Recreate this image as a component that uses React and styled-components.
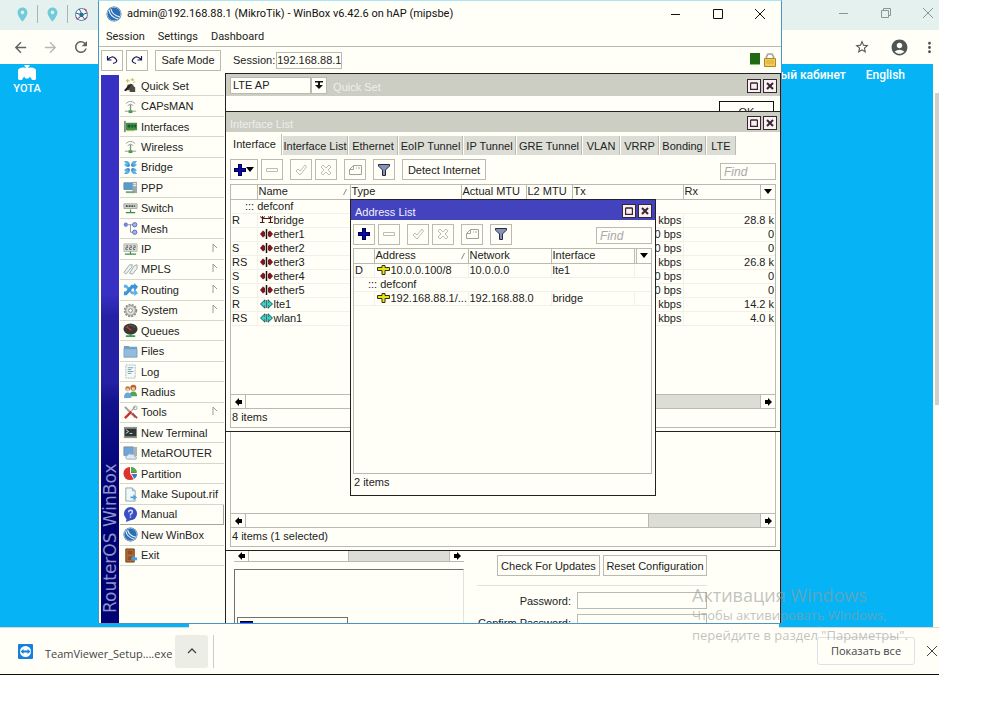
import styled, { createGlobalStyle, css } from 'styled-components'
import { MdArrowBack, MdArrowForward, MdRefresh, MdStarBorder, MdAccountCircle, MdMoreVert, MdPlace } from 'react-icons/md'

const colors = {
	paper: '#fffff8',
	line: '#b9bab2',
	soft: '#e2e3dc',
	bar: '#cccec4',
	track: '#dcded6',
	sky: '#06b4f6',
	ink: '#222222'
}

const fonts = {
	ui: '"Liberation Sans", Arial, sans-serif',
	system: '"Open Sans", "Noto Sans", sans-serif',
	web: 'Roboto, "Noto Sans", sans-serif'
}

const GlobalStyle = createGlobalStyle`
	* {
		box-sizing: border-box;
	}
	body {
		margin: 0;
		background: #ffffff;
		color: ${colors.ink};
		font: 11px/14px ${fonts.ui};
	}
	button, input, select {
		margin: 0;
		padding: 0;
		border-radius: 0;
		font: inherit;
		color: inherit;
		appearance: none;
	}
	svg {
		display: block;
		flex: none;
	}
`

/* browser */

const Browser = styled.div`
	position: relative;
	margin-right: 61px;
	display: flex;
	flex-direction: column;
	background: ${colors.paper};
	border-bottom: 1px solid #111111;
	overflow: hidden;
`

const TabStrip = styled.div`
	display: flex;
	align-items: center;
	justify-content: space-between;
	height: 30px;
	padding: 0 5px 4px 14px;
	background: #e4f1ef;
`

const PinnedTabs = styled.div`
	display: flex;
	align-items: center;
	color: #72cbd8;
	gap: 6px;
	padding-top: 2px;
`

const TabDivider = styled.span`
	width: 1px;
	height: 18px;
	background: #a9b3b1;
`

const Caption = styled.div`
	display: flex;
	align-items: center;
	gap: ${p => p.$gap}px;
	color: ${p => p.$color};
`

const Ghost = styled.button`
	display: flex;
	align-items: center;
	justify-content: center;
	border: 0;
	background: none;
	color: inherit;
`

const AddressBar = styled.div`
	display: flex;
	align-items: center;
	justify-content: space-between;
	height: 34px;
	padding: 0 1px 0 12px;
	color: #5c6463;
`

const NavButtons = styled.div`
	display: flex;
	gap: 13px;
`

const Page = styled.main`
	display: flex;
	justify-content: space-between;
	height: 564px;
	background: ${colors.sky};
	border-bottom: 1px solid #d8d8d4;
	color: #ffffff;
	font-family: ${fonts.web};
`

const Yota = styled.a`
	display: flex;
	flex-direction: column;
	align-items: center;
	width: 54px;
	height: 34px;
	padding-top: 1px;
	color: #ffffff;
	font: 500 11px/14px ${fonts.web};
	text-decoration: none;
`

const PageLinks = styled.nav`
	display: flex;
	gap: 20px;
	padding: 4px 28px 0 0;
	margin-left: auto;
	a {
		color: #ffffff;
		font-size: 12px;
		font-weight: 500;
		text-decoration: none;
	}
`

const PageScroll = styled.div`
	width: 6px;
	padding: 29px 0 0 2px;
	background: ${colors.paper};
`

const PageThumb = styled.div`
	height: 312px;
	background: #cfcfcb;
`

const PageCard = styled.div`
	position: absolute;
	top: 623px;
	left: 189px;
	right: 160px;
	height: 5px;
	background: ${colors.paper};
`

const Downloads = styled.footer`
	display: flex;
	align-items: center;
	height: 46px;
	padding: 0 1px 0 18px;
	font: 11px/16px ${fonts.system};
	color: #444444;
`

const FileName = styled.span`
	width: 128px;
	margin-left: 12px;
	padding-top: 5px;
	white-space: nowrap;
`

const Chevron = styled(Ghost)`
	width: 33px;
	height: 33px;
	border-radius: 3px;
	background: #eceee6;
	margin-left: 2px;
`

const DownloadDivider = styled.span`
	width: 1px;
	height: 33px;
	margin-left: 5px;
	background: #cccccc;
`

const ShowAll = styled.button`
	width: 98px;
	height: 28px;
	margin-left: auto;
	margin-right: 11px;
	border: 1px solid #dfe0e8;
	border-radius: 3px;
	background: ${colors.paper};
	font: 500 11px/14px ${fonts.system};
`

const Watermark = styled.div`
	position: absolute;
	z-index: 5;
	top: 585px;
	right: 26px;
	width: 221px;
	color: rgba(150, 155, 150, 0.6);
	font: 13px/20px ${fonts.system};
	white-space: nowrap;
	pointer-events: none;
	p {
		margin: 0;
	}
	p:first-child {
		font-size: 18px;
	}
`

/* winbox shell */

const Shell = styled.section`
	position: absolute;
	z-index: 2;
	top: 0;
	left: 98px;
	right: 157px;
	height: 624px;
	display: flex;
	flex-direction: column;
	background: ${colors.paper};
	border: 1px solid #4796c6;
	border-top: 1px solid #a9e6f4;
`

const ShellTitle = styled.header`
	display: flex;
	align-items: center;
	justify-content: space-between;
	height: 26px;
	padding: 0 15px 0 7px;
	font: 11px/16px ${fonts.web};
	color: #111111;
`

const TitleText = styled.div`
	display: flex;
	align-items: center;
	gap: 5px;
	white-space: nowrap;
`

const MenuBar = styled.nav`
	display: flex;
	align-items: center;
	gap: 13px;
	height: 20px;
	padding-left: 7px;
	border-bottom: 1px solid ${colors.line};
	font: 11px/14px ${fonts.web};
`

const Toolbar = styled.div`
	display: flex;
	align-items: center;
	gap: 3px;
	height: 26px;
	padding: 0 5px 0 2px;
`

const Button = styled.button`
	display: flex;
	align-items: center;
	justify-content: center;
	flex: none;
	width: ${p => p.$w || 22}px;
	height: ${p => p.$h || 21}px;
	margin-left: ${p => (p.$apart ? 4 : 0)}px;
	border: 1px solid ${p => (p.$dark ? '#111111' : colors.line)};
	background: ${colors.paper};
	color: ${colors.ink};
	white-space: nowrap;
`

const Field = styled.input`
	width: ${p => p.$w}px;
	height: ${p => p.$h || 17}px;
	padding: 0 ${p => (p.$tight ? 0 : 3)}px;
	border: 1px solid ${colors.line};
	background: ${colors.paper};
	&::placeholder {
		color: #aaaaaa;
		font-size: 12px;
		font-style: italic;
		opacity: 1;
	}
`

const SessionLabel = styled.label`
	display: flex;
	align-items: center;
	gap: 1px;
	margin-left: 9px;
`

const Status = styled.div`
	display: flex;
	gap: 4px;
	margin-left: auto;
`

const Load = styled.span`
	width: 10px;
	height: 12px;
	background: #1f6a12;
	border-bottom: 1px solid #6fd06a;
`

const ShellBody = styled.div`
	flex: 1;
	display: flex;
	min-height: 0;
	padding-left: 2px;
`

const Rail = styled.div`
	width: 18px;
	margin-top: 2px;
	padding-top: 10px;
	background: linear-gradient(to top, #3730c2 40%, #2521a4 44%, #2521a4 56%, #12128c 60%, #000075 76%);
	color: #8f93c4;
	font: 17px/18px "DejaVu Sans", sans-serif;
	writing-mode: vertical-rl;
	transform: rotate(180deg);
`

const Menu = styled.ul`
	display: grid;
	grid-auto-rows: 1fr;
	width: 104px;
	height: 490px;
	margin: 3px 1px 0;
	padding: 0;
	list-style: none;
`

const MenuItem = styled.li`
	margin-right: 1px;
	border-bottom: 1px solid #d6d7cf;
	${p =>
		p.$active &&
		css`
			border-right: 1px solid #a5a69e;
			border-bottom-color: #a5a69e;
		`}
	a {
		display: flex;
		align-items: center;
		gap: 3px;
		height: 100%;
		padding: 0 6px 0 3px;
		color: inherit;
		text-decoration: none;
		white-space: nowrap;
	}
	a > svg:last-child:not(:first-child) {
		margin-left: auto;
	}
`

const Workspace = styled.div`
	position: relative;
	flex: 1;
	min-width: 0;
	overflow: hidden;
	border-top: 1px solid #222222;
	border-left: 1px solid #222222;
	border-right: 1px solid #222222;
`

/* inner windows */

const Frame = styled.section`
	position: absolute;
	top: ${p => p.$top}px;
	left: ${p => p.$left || 0}px;
	right: ${p => p.$right || 0}px;
	height: ${p => p.$height}px;
	display: flex;
	flex-direction: column;
	background: ${colors.paper};
	border-bottom: ${p => (p.$flat ? 0 : 1)}px solid #222222;
	border-top: ${p => (p.$flat ? 0 : 1)}px solid #222222;
	${p =>
		p.$boxed &&
		css`
			border-left: 1px solid #222222;
			border-right: 1px solid #222222;
		`}
`

const FrameTitle = styled.header`
	display: flex;
	align-items: center;
	height: ${p => p.$h || 20}px;
	flex: none;
	padding: 0 3px 0 4px;
	background: ${p => (p.$active ? '#4343be' : colors.bar)};
	color: ${p => (p.$active ? '#f2f2ff' : '#eeeeea')};
	h2 {
		margin: 0;
		padding-top: 3px;
		font: inherit;
	}
`

const FrameButtons = styled.div`
	display: flex;
	gap: 2px;
	margin-left: auto;
	padding-top: 1px;
`

const FrameButton = styled(Ghost)`
	width: 14px;
	height: 14px;
	border: 1px solid #33282e;
	background: #fbeff4;
	color: #33282e;
`

const Mode = styled.select`
	width: 81px;
	height: 17px;
	padding: 0 2px;
	border: 1px solid ${colors.line};
	background: ${colors.paper};
	color: ${colors.ink};
`

const FrameBody = styled.div`
	flex: 1;
	min-height: 0;
	display: flex;
	flex-direction: column;
	padding: ${p => p.$pad || '0 4px 3px'};
`

const Tabs = styled.div`
	display: flex;
	align-items: flex-end;
	gap: 1px;
	height: 23px;
	margin-left: -2px;
`

const Tab = styled.button`
	width: ${p => p.$w}px;
	height: ${p => (p.$active ? 21 : 19)}px;
	padding-bottom: ${p => (p.$active ? 2 : 0)}px;
	border: 0;
	border-right: 1px solid ${colors.line};
	background: ${p => (p.$active ? colors.paper : colors.track)};
	white-space: nowrap;
`

const Tools = styled.div`
	display: flex;
	align-items: center;
	gap: 3px;
	height: ${p => p.$h}px;
	flex: none;
	> input {
		margin-left: auto;
		align-self: flex-end;
		margin-bottom: 4px;
	}
`

const Sheet = styled.div`
	flex: 1;
	min-height: 0;
	display: flex;
	flex-direction: column;
	border: 1px solid ${colors.line};
`

const Grid = styled.table`
	width: 100%;
	table-layout: fixed;
	border-collapse: collapse;
	th {
		height: 14px;
		padding: 0 0 0 1px;
		border-right: 1px solid ${colors.line};
		border-bottom: 1px solid ${colors.line};
		font-weight: 400;
		line-height: 13px;
		text-align: left;
	}
	th:last-child, td:last-child {
		border-right: 0;
	}
	td {
		height: 14px;
		padding: 0 1px;
		border-right: 1px solid #f1f1e9;
		border-bottom: 1px solid #f1f1e9;
		line-height: 13px;
		white-space: nowrap;
	}
`

const HeadCell = styled.span`
	display: flex;
	align-items: center;
	justify-content: ${p => (p.$center ? 'center' : 'space-between')};
	height: 13px;
	padding-right: ${p => (p.$center ? 0 : 3)}px;
	white-space: nowrap;
`

const NameCell = styled.span`
	display: flex;
	align-items: center;
	gap: 1px;
	padding-left: 1px;
`

const Num = styled.td`
	text-align: right;
`

const Note = styled.td`
	&& {
		padding-left: ${p => p.$indent}px;
	}
`

const Track = styled.div`
	display: flex;
	flex: none;
	height: ${p => p.$h || 15}px;
	margin-top: ${p => (p.$bottom ? 'auto' : 0)};
	border-top: ${p => (p.$cut ? 0 : 1)}px solid ${colors.line};
	border-bottom: 1px solid ${colors.line};
	background: ${colors.track};
`

const TrackButton = styled(Ghost)`
	width: 15px;
	background: ${colors.paper};
	color: #000000;
	border-right: ${p => (p.$end ? 0 : 1)}px solid ${colors.line};
	border-left: ${p => (p.$end ? 1 : 0)}px solid ${colors.line};
`

const TrackThumb = styled.div`
	width: ${p => p.$size};
	margin-right: auto;
	background: ${colors.paper};
	border-right: 1px solid ${colors.line};
`

const Count = styled.div`
	height: 18px;
	flex: none;
	padding: 2px 1px;
	line-height: 13px;
`

const OkRow = styled.div`
	display: flex;
	justify-content: flex-end;
	padding: 5px 2px 0 0;
`

const QuickBottom = styled.div`
	display: flex;
	gap: 13px;
	height: 73px;
	margin-top: auto;
	padding: 0 69px 0 4px;
	overflow: hidden;
`

const QuickLeft = styled.div`
	width: 230px;
`

const Canvas = styled.div`
	height: 60px;
	margin-top: 7px;
	padding: 47px 0 0 2px;
	border-top: 1px solid #70716b;
	border-left: 1px solid #70716b;
	border-right: 1px solid ${colors.soft};
`

const Legend = styled.div`
	width: 111px;
	height: 20px;
	padding: 3px 2px;
	border: 1px solid #70716b;
	span {
		display: block;
		width: 13px;
		height: 10px;
		background: #1111d8;
		border-top: 1px solid #000000;
	}
`

const QuickRight = styled.div`
	flex: 1;
	display: flex;
	flex-direction: column;
	align-items: flex-end;
`

const Actions = styled.div`
	display: flex;
	gap: 3px;
	padding: 5px 0 9px;
`

const Rule = styled.hr`
	width: 100%;
	margin: 0 0 6px;
	border: 0;
	border-top: 1px solid ${colors.soft};
`

const FormRow = styled.label`
	display: flex;
	align-items: center;
	gap: 6px;
	margin-bottom: 5px;
	white-space: nowrap;
`

/* drawings */

const art = {
	quickset: <><path d="M3 13h8V7H5z" fill="#4b4b44" /><path d="M1 13 8 6l2 1-7 7z" fill="#222" /><path d="M8 6 13 10v5H7z" fill="#4c4b40" /><path d="M5 1v4M3 3h4M10 0v3M8 2h4M13 4l-2 1" stroke="#c8b944" /></>,
	antenna: <><path d="M3 5q5-5 10 0M5 7q3-3 6 0" fill="none" stroke="#9aa39a" /><path d="M8 6v6" stroke="#7c8f7e" strokeWidth="1.4" /><path d="M2 13h12" stroke="#8e988f" /><path d="M6 12h4v3H6z" fill="#3e9a4a" /></>,
	nic: <><path d="M1 2h2v12H1z" fill="#8b8f86" /><path d="M3 4h12v8H3z" fill="#3d9448" /><path d="M5 6h3v3H5zM9 6h2v3H9zM12 6h2v3h-2z" fill="#1d5428" /><path d="M4 12h8v1H4z" fill="#b8ac48" /></>,
	bridge: <><path d="M1 1h4l2 2v4H3L1 5l2-1zM15 1h-4L9 3v4h4l2-2-2-1zM1 15h4l2-2V9H3l-2 2 2 1zM15 15h-4l-2-2V9h4l2 2-2 1z" fill="#62b1e4" /><path d="M6.500 4v2.500H4M9.500 4v2.500H12M6.500 12V9.500H4M9.500 12V9.500H12" fill="none" stroke="#2374b8" /></>,
	ppp: <><path d="M1 3h10v7H1z" fill="#4f9fd6" stroke="#6d8798" /><path d="M10 2h5v12h-5z" fill="#9aa9b0" /><path d="M11 4h3M11 6h3" stroke="#fff" /><path d="M3 12h9v2H3z" fill="#70a86d" /></>,
	switch: <><path d="M1 3h14v5H1z" fill="#d2d5cf" stroke="#a3a8a2" /><path d="M3 5.500h10" stroke="#444" strokeWidth="2" strokeDasharray="2 1" /><path d="M8 9v4M3 12.500h10" stroke="#3e8a4a" strokeWidth="1.3" /></>,
	mesh: <><path d="M5 4h6M8 4v8h4" fill="none" stroke="#8a8fa0" /><circle cx="3" cy="4" r="2.3" fill="#6f86dc" /><circle cx="12.500" cy="4" r="2.3" fill="#a5b4ec" stroke="#5268c0" /><circle cx="12.500" cy="12" r="2.3" fill="#a5b4ec" stroke="#5268c0" /></>,
	ip: <><path d="M1 2h14v8H1z" fill="#dde0da" stroke="#b3b8b2" /><path d="M3 4h2v2H3v2h2M7 4h2v2H7v2h2M11 4h2v2h-2v2h2" fill="none" stroke="#666" /><path d="M8 10v3M2 13h12" stroke="#3e8a4a" strokeWidth="1.3" /></>,
	tags: <path d="m1 11 6-8 3 0-1 3-6 7zM7 12l5-8 3-1v4l-5 6z" fill="#eef2f2" stroke="#98a7aa" />,
	routing: <><path d="M1 3h3l6 7h2V7l4 5-4 3v-2H9L3 6H1z" fill="#62b1e8" /><path d="M1 14h3l6-7h2v3l4-5-4-4v2H9l-6 7H1z" fill="#3f93d6" /></>,
	gear: <><circle cx="8" cy="8" r="6" fill="#c4c5c0" stroke="#8d8e88" strokeWidth="2.4" strokeDasharray="2 1.2" /><circle cx="8" cy="8" r="5" fill="#dededa" stroke="#a6a79f" /><circle cx="8" cy="8" r="2" fill="#fff" stroke="#888" /></>,
	gauge: <><ellipse cx="8" cy="6.5" rx="7.500" ry="6" fill="#3b3937" /><path d="M3 5q5-5 10 0" fill="none" stroke="#83827c" strokeDasharray="1 1" /><path d="m4 4 5 4" stroke="#d93229" strokeWidth="1.5" /><path d="M7 12h2v1h4v2H3v-2h4z" fill="#3e9a4a" /></>,
	folder: <><path d="M1 2h5l1 1h8v11H1z" fill="#6f9fc7" /><path d="M1 5h14v9H1z" fill="#92bbdd" stroke="#6a98bf" strokeWidth=".7" /></>,
	log: <><path d="M3 1h10v14H3z" fill="#f5fafa" stroke="#9fb8bf" strokeDasharray="2 1" /><path d="M5 4h6M5 6h4M5 8h6M5 10h4" stroke="#7d9db0" /></>,
	people: <><circle cx="5" cy="5" r="2.6" fill="#b07848" /><circle cx="11" cy="4" r="3.200" fill="#bd5f31" /><circle cx="11" cy="5" r="1.8" fill="#f0c79b" /><circle cx="5" cy="6" r="1.8" fill="#f0c79b" /><path d="M7 13q0-5 4-5t4 5z" fill="#4ca457" /><path d="M1 15q0-6 4-6t4 6z" fill="#6aa8dc" /></>,
	tools: <><path d="m2 2 11 11" stroke="#9ba1a1" strokeWidth="2.2" /><path d="M13 2 9 6" stroke="#9ba1a1" strokeWidth="1.5" /><path d="m9 7-7 7" stroke="#cf2f2b" strokeWidth="2.5" /><path d="m10 9 5 5" stroke="#b73d34" strokeWidth="2" /><circle cx="13" cy="3" r="2" fill="none" stroke="#9ba1a1" /></>,
	terminal: <><path d="M1 2h14v12H1z" fill="#8d938f" /><path d="M2 4h12v8H2z" fill="#2f3434" /><path d="m3 5 3 2-3 2M7 9h3" fill="none" stroke="#dadada" /></>,
	meta: <><path d="M1 1h10v9H1z" fill="#6ba6dc" stroke="#7e8c98" /><path d="M11 1h4v10h-4z" fill="#a9b1b5" /><path d="M4 14q-3-3 1-4 1-3 4-1 4-1 3 2 3 0 2 3z" fill="#dfe9f2" stroke="#9bb0c4" /></>,
	pie: <><circle cx="7.5" cy="8" r="7" fill="#dd3330" /><path d="M8 7V1a6.5 6.5 0 0 1 7 6z" fill="#4cae4c" /><path d="M9 8h6a6.5 6.5 0 0 1-4 6z" fill="#3b76c4" /><path d="M8 1v7h7M8 8l4 6" fill="none" stroke="#fff" /></>,
	doc: <><path d="M3 1h7l3 3v11H3z" fill="#eef7fa" stroke="#8ca7b5" /><path d="M10 1v3h3" fill="none" stroke="#8ca7b5" /><path d="M8 10h3V8l4 3-4 3v-2H8z" fill="#53a0dc" /></>,
	help: <><circle cx="8" cy="7" r="7" fill="#3b4fc4" /><path d="m4 12-1 4 5-2z" fill="#3b4fc4" /><path d="M6 5.5q0-2 2-2t2 1.8Q10 7 8 7.6V9M8 10v1.5" fill="none" stroke="#dbe3ff" strokeWidth="1.5" /></>,
	winbox: <><circle cx="8" cy="8" r="7.500" fill="#2e6fb4" /><circle cx="8" cy="8" r="6.800" fill="none" stroke="#9bb9d6" /><path d="M3 4q1 7 9 9M5 3q1 6 9 8" fill="none" stroke="#e8f2fa" strokeWidth="1.2" /></>,
	exit: <><path d="M3 1h9v14H3z" fill="#b46c36" stroke="#70411f" /><path d="M5 3h5v4H5zM5 9h5v4H5z" fill="#8d4f25" /><path d="M15 10h-3V8l-4 3.5 4 3V13h3z" fill="#4a9edc" /></>
}

const Art = ({ name, size = 16 }) => (
	<svg width={size} height={size} viewBox="0 0 16 16">{art[name]}</svg>
)

const Svg = ({ w = 12, h = 12, children }) => (
	<svg width={w} height={h} viewBox={`0 0 ${w} ${h}`} fill="none" stroke="currentColor">{children}</svg>
)

const Minimize = () => <Svg><path d="M1 6.5h9" /></Svg>
const Maximize = () => <Svg><path d="M1.5 1.5h9v9h-9z" /></Svg>
const Close = () => <Svg><path d="m1 1 10 10M11 1 1 11" /></Svg>
const Restore = () => <Svg><path d="M1.5 3.5h7v7h-7zM3.5 3.500v-2h7v7h-2" /></Svg>
const Plus = () => <Svg><path d="M6 0v12M0 6h12" stroke="#000044" strokeWidth="4" /><path d="M6 1v10M1 6h10" stroke="#0808b8" strokeWidth="2" /></Svg>
const Minus = () => <Svg><path d="M.5 4.500h11v3H.5z" stroke="#bdbdb6" /></Svg>
const Check = () => <Svg><path d="m1 7 2-2 2 2 5-6 1.500 2L5 11z" stroke="#bdbdb6" /></Svg>
const Cross = () => <Svg><path d="m1 3 2-2 3 3 3-3 2 2-3 3 3 3-2 2-3-3-3 3-2-2 3-3z" stroke="#bdbdb6" /></Svg>
const NoteIcon = () => <Svg w={13}><path d="M4.500 1.500h8v9H.5v-5z M4.500 1.500v4H.5M7 4h1M9 4h2" stroke="#a2a29b" /></Svg>
const Funnel = () => <Svg><path d="M.5.5h11v1.500L7.500 6v5.500h-3V6L.5 2z" fill="#8792b8" stroke="#252a3c" /></Svg>
const Caret = () => <svg width="8" height="5" viewBox="0 0 8 5"><path d="M0 0h8L4 5z" fill="#000" /></svg>
const Sort = () => <svg width="4" height="6" viewBox="0 0 4 6"><path d="M.5 6 3.500 0" stroke="#888" /></svg>
const Sub = () => <svg width="6" height="14" viewBox="0 0 6 14"><path d="M1 10V2l4 4" fill="none" stroke="#9b9b94" /></svg>
const Arrow = ({ right }) => (
	<svg width="7" height="8" viewBox="0 0 7 8">
		<path d={right ? 'M7 4 3 0v2H0v4h3v2z' : 'M0 4l4-4v2h3v4H4v2z'} fill="#000" />
	</svg>
)
const Drop = () => <svg width="8" height="9" viewBox="0 0 8 9"><path d="M0 0h8v1.500H5V4h3L4 8 0 4h3V1.500H0z" fill="#111" /></svg>

const PortIcon = ({ kind }) => {
	if (kind === 'bridge')
		return <Svg w={13} h={10}><path d="M2.500 1v7M10.500 1v7M0 7.500h4.500M8.500 7.500H13M2 3.500h9" stroke="#4b1b20" strokeWidth="1.200" /><path d="m0 1.500 2.500 2L5 1.500M8 1.500l2.500 2 2.500-2" stroke="#4b1b20" /></Svg>
	if (kind === 'ether')
		return (
			<Svg w={13} h={10}>
				<path d="M0 5l3-3.500 2 1.500v4L3 8.500zM13 5l-3-3.500L8 3v4l2 1.500z" fill="#7b1820" stroke="none" />
				<path d="M6.500 0v10" stroke="#111111" strokeWidth="1.500" />
			</Svg>
		)
	return (
		<Svg w={13} h={10}>
			<path d="M.5 5 5 .8v8.400zM12.500 5 8 .8v8.400z" fill="#3fd0c4" stroke="#0f5f5c" />
			<path d="M4 5h5" stroke="#3fd0c4" strokeWidth="2" />
			<path d="M6.500 1v8" stroke="#0f5f5c" strokeWidth=".8" />
		</Svg>
	)
}

const AddressIcon = () => <Svg w={13} h={10}><path d="M5 .5h3v2h4.500v3H8v4H5v-4H.5v-3H5z" fill="#e6e21c" stroke="#33330c" /></Svg>

const YotaMark = () => (
	<svg width="18" height="17" viewBox="0 0 18 17">
		<path d="M6 0h6l-2 3a7 7 0 0 1 7 12H1A7 7 0 0 1 8 3z" fill="#fff" />
		<path d="M4 16a5 5 0 1 1 10 0z" fill="#06b4f6" />
		<circle cx="9" cy="11" r="2.600" fill="#fff" />
	</svg>
)

const Ball = () => (
	<svg width="15" height="15" viewBox="0 0 15 15">
		<circle cx="7.500" cy="7.500" r="6" fill="#eef6f8" stroke="#5b7ba6" />
		<path d="m7 5 3 2-1 3H6L5 7z" fill="#2c6d8c" />
		<path d="m7 5-2-3M10 7l3-1M9 10l2 3M6 10l-3 2M5 7 2 6" stroke="#3a5687" />
		<path d="M10 1l3 2-1 2zM1 9l3 3-1 1zM11 13l3-3-3 1z" fill="#d03a58" />
	</svg>
)

const Lock = () => (
	<svg width="12" height="14" viewBox="0 0 12 14">
		<path d="M2.500 7V3.500L4 1h4l1.500 2.500V7" fill="none" stroke="#a5a59a" strokeWidth="1.600" />
		<path d="M.5 5.500h11v8H.5z" fill="#f2cd52" stroke="#a98a2c" />
		<path d="M2 8h8M2 10h8" stroke="#d6a935" />
	</svg>
)

const TeamViewer = () => (
	<svg width="15" height="15" viewBox="0 0 15 15">
		<rect width="15" height="15" rx="1" fill="#1681dc" />
		<circle cx="7.500" cy="7.500" r="5.500" fill="#fff" />
		<path d="m2.500 7.500 3-2.500v1.500h4V5l3 2.500-3 2.500V8.500h-4V10z" fill="#1681dc" />
	</svg>
)

/* data */

const menu = [
	['Quick Set', 'quickset'],
	['CAPsMAN', 'antenna'],
	['Interfaces', 'nic'],
	['Wireless', 'antenna'],
	['Bridge', 'bridge'],
	['PPP', 'ppp'],
	['Switch', 'switch'],
	['Mesh', 'mesh'],
	['IP', 'ip', true],
	['MPLS', 'tags', true],
	['Routing', 'routing', true],
	['System', 'gear', true],
	['Queues', 'gauge'],
	['Files', 'folder'],
	['Log', 'log'],
	['Radius', 'people'],
	['Tools', 'tools', true],
	['New Terminal', 'terminal'],
	['MetaROUTER', 'meta'],
	['Partition', 'pie'],
	['Make Supout.rif', 'doc'],
	['Manual', 'help'],
	['New WinBox', 'winbox'],
	['Exit', 'exit']
]

const tabs = [
	['Interface', 54],
	['Interface List', 65],
	['Ethernet', 49],
	['EoIP Tunnel', 64],
	['IP Tunnel', 52],
	['GRE Tunnel', 65],
	['VLAN', 37],
	['VRRP', 38],
	['Bonding', 46],
	['LTE', 29]
]

const ports = [
	['R', 'bridge', 'bridge', 'kbps', '28.8 k'],
	['', 'ether1', 'ether', '0 bps', '0'],
	['S', 'ether2', 'ether', '0 bps', '0'],
	['RS', 'ether3', 'ether', 'kbps', '26.8 k'],
	['S', 'ether4', 'ether', '0 bps', '0'],
	['S', 'ether5', 'ether', '0 bps', '0'],
	['R', 'lte1', 'radio', 'kbps', '14.2 k'],
	['RS', 'wlan1', 'radio', 'kbps', '4.0 k']
]

const WindowButtons = () => (
	<FrameButtons>
		<FrameButton aria-label="Maximize"><Svg w={8} h={8}><path d="M.5 1h7M.5 1v6.500h7V1" strokeWidth="1.400" /></Svg></FrameButton>
		<FrameButton aria-label="Close"><Svg w={8} h={8}><path d="m1 1 6 6M7 1 1 7" strokeWidth="2" /></Svg></FrameButton>
	</FrameButtons>
)

const RowTools = ({ menu }) => (
	<>
		<Button $w={menu ? 28 : 22} aria-label="Add"><Plus />{menu && <Caret />}</Button>
		<Button aria-label="Remove"><Minus /></Button>
		<Button $apart aria-label="Enable"><Check /></Button>
		<Button aria-label="Disable"><Cross /></Button>
		<Button $apart aria-label="Comment"><NoteIcon /></Button>
		<Button $apart aria-label="Filter"><Funnel /></Button>
	</>
)

const Scrollbar = ({ size, ...rest }) => (
	<Track {...rest}>
		<TrackButton aria-label="Scroll left"><Arrow /></TrackButton>
		<TrackThumb $size={size} />
		<TrackButton $end aria-label="Scroll right"><Arrow right /></TrackButton>
	</Track>
)

const QuickSet = () => (
	<Frame $top={0} $height={549} $flat>
		<FrameTitle $h={22}>
			<Mode aria-label="Mode" defaultValue="LTE AP"><option>LTE AP</option></Mode>
			<Button $w={16} $h={17} aria-label="Open list"><Drop /></Button>
			<h2>&nbsp; Quick Set</h2>
			<WindowButtons />
		</FrameTitle>
		<FrameBody $pad="0 4px 0">
			<OkRow><Button $w={55} $dark>OK</Button></OkRow>
			<QuickBottom>
				<QuickLeft>
					<Scrollbar size="100px" $h={12} $cut />
					<Canvas><Legend><span /></Legend></Canvas>
				</QuickLeft>
				<QuickRight>
					<Actions>
						<Button $w={103}>Check For Updates</Button>
						<Button $w={104}>Reset Configuration</Button>
					</Actions>
					<Rule />
					<FormRow>Password:<Field type="password" $w={130} /></FormRow>
					<FormRow>Confirm Password:<Field type="password" $w={130} /></FormRow>
				</QuickRight>
			</QuickBottom>
		</FrameBody>
	</Frame>
)

const HiddenList = () => (
	<Frame $top={340} $height={137}>
		<FrameBody>
			<Sheet>
				<Scrollbar size="calc(100% - 141px)" $bottom />
				<Count>4 items (1 selected)</Count>
			</Sheet>
		</FrameBody>
	</Frame>
)

const InterfaceList = () => (
	<Frame $top={37} $height={321}>
		<FrameTitle><h2>Interface List</h2><WindowButtons /></FrameTitle>
		<FrameBody>
			<Tabs>
				{tabs.map(([label, width], i) => (
					<Tab key={label} $w={width} $active={i === 0}>{label}</Tab>
				))}
			</Tabs>
			<Tools $h={29}>
				<RowTools menu />
				<Button $w={84} $apart>Detect Internet</Button>
				<Field $w={56} placeholder="Find" aria-label="Find" />
			</Tools>
			<Sheet>
				<Grid>
					<colgroup>
						<col width="26" /><col width="93" /><col width="111" /><col width="65" />
						<col width="46" /><col /><col width="77" /><col width="15" />
					</colgroup>
					<thead>
						<tr>
							<th />
							<th><HeadCell>Name<Sort /></HeadCell></th>
							<th>Type</th>
							<th>Actual MTU</th>
							<th>L2 MTU</th>
							<th>Tx</th>
							<th>Rx</th>
							<th><HeadCell $center><Caret /></HeadCell></th>
						</tr>
					</thead>
					<tbody>
						<tr><Note colSpan={8} $indent={14}>::: defconf</Note></tr>
						{ports.map(([flag, name, kind, tx, rx]) => (
							<tr key={name}>
								<td>{flag}</td>
								<td><NameCell><PortIcon kind={kind} />{name}</NameCell></td>
								<td /><td /><td />
								<Num>{tx}</Num>
								<Num colSpan={2}>{rx}</Num>
							</tr>
						))}
					</tbody>
				</Grid>
				<Scrollbar size="calc(100% - 180px)" $bottom />
				<Count>8 items</Count>
			</Sheet>
		</FrameBody>
	</Frame>
)

const AddressList = () => (
	<Frame $top={125} $left={124} $right={124} $height={297} $boxed>
		<FrameTitle $active><h2>Address List</h2><WindowButtons /></FrameTitle>
		<FrameBody $pad="0 3px 3px 2px">
			<Tools $h={28}>
				<RowTools />
				<Field $w={56} placeholder="Find" aria-label="Find address" />
			</Tools>
			<Sheet>
				<Grid>
					<colgroup>
						<col width="20" /><col width="94" /><col width="83" /><col width="83" /><col /><col width="15" />
					</colgroup>
					<thead>
						<tr>
							<th />
							<th><HeadCell>Address<Sort /></HeadCell></th>
							<th>Network</th>
							<th>Interface</th>
							<th />
							<th><HeadCell $center><Caret /></HeadCell></th>
						</tr>
					</thead>
					<tbody>
						<tr>
							<td>D</td>
							<td><NameCell><AddressIcon />10.0.0.100/8</NameCell></td>
							<td>10.0.0.0</td>
							<td>lte1</td>
							<td colSpan={2} />
						</tr>
						<tr><Note colSpan={6} $indent={14}>::: defconf</Note></tr>
						<tr>
							<td />
							<td><NameCell><AddressIcon />192.168.88.1/...</NameCell></td>
							<td>192.168.88.0</td>
							<td>bridge</td>
							<td colSpan={2} />
						</tr>
					</tbody>
				</Grid>
			</Sheet>
			<Count>2 items</Count>
		</FrameBody>
	</Frame>
)

const WinBox = () => (
	<Shell>
		<ShellTitle>
			<TitleText>
				<Art name="winbox" />
				admin@192.168.88.1 (MikroTik) - WinBox v6.42.6 on hAP (mipsbe)
			</TitleText>
			<Caption $gap={30} $color="#111111">
				<Ghost aria-label="Minimize"><Minimize /></Ghost>
				<Ghost aria-label="Maximize"><Maximize /></Ghost>
				<Ghost aria-label="Close"><Close /></Ghost>
			</Caption>
		</ShellTitle>
		<MenuBar>
			<Ghost>Session</Ghost>
			<Ghost>Settings</Ghost>
			<Ghost>Dashboard</Ghost>
		</MenuBar>
		<Toolbar>
			<Button aria-label="Undo"><Svg><path d="M1.500 2v4h4M2 5.500Q6 1 9.500 4.500T7 9.500" stroke="#17175e" strokeWidth="1.200" /></Svg></Button>
			<Button aria-label="Redo"><Svg><path d="M10.500 2v4h-4M10 5.500Q6 1 2.500 4.500T5 9.500" stroke="#17175e" strokeWidth="1.200" /></Svg></Button>
			<Button $w={66} $apart>Safe Mode</Button>
			<SessionLabel>Session:<Field $w={66} $tight defaultValue="192.168.88.1" /></SessionLabel>
			<Status><Load /><Lock /></Status>
		</Toolbar>
		<ShellBody>
			<Rail>RouterOS WinBox</Rail>
			<Menu>
				{menu.map(([label, icon, sub]) => (
					<MenuItem key={label} $active={label === 'Manual'}>
						<a href="#"><Art name={icon} size={15} />{label}{sub && <Sub />}</a>
					</MenuItem>
				))}
			</Menu>
			<Workspace>
				<QuickSet />
				<HiddenList />
				<InterfaceList />
				<AddressList />
			</Workspace>
		</ShellBody>
	</Shell>
)

const App = () => {
	return (
		<>
			<GlobalStyle />
			<Browser>
				<TabStrip>
					<PinnedTabs>
						<MdPlace size={17} />
						<TabDivider />
						<MdPlace size={17} />
						<TabDivider />
						<Ball />
					</PinnedTabs>
					<Caption $gap={30} $color="#8b9694">
						<Ghost aria-label="Minimize browser"><Minimize /></Ghost>
						<Ghost aria-label="Restore browser"><Restore /></Ghost>
						<Ghost aria-label="Close browser"><Close /></Ghost>
					</Caption>
				</TabStrip>
				<AddressBar>
					<NavButtons>
						<Ghost aria-label="Back"><MdArrowBack size={17} /></Ghost>
						<Ghost aria-label="Forward"><MdArrowForward size={17} color="#b3bab8" /></Ghost>
						<Ghost aria-label="Reload"><MdRefresh size={18} /></Ghost>
					</NavButtons>
					<Caption $gap={20} $color="#4d5655">
						<Ghost aria-label="Bookmark"><MdStarBorder size={16} /></Ghost>
						<Caption $gap={12}>
							<Ghost aria-label="Profile"><MdAccountCircle size={19} /></Ghost>
							<Ghost aria-label="Menu"><MdMoreVert size={17} /></Ghost>
						</Caption>
					</Caption>
				</AddressBar>
				<Page>
					<Yota href="#"><YotaMark />YOTA</Yota>
					<PageLinks>
						<a href="#">Личный кабинет</a>
						<a href="#">English</a>
					</PageLinks>
					<PageScroll><PageThumb /></PageScroll>
				</Page>
				<PageCard />
				<Downloads>
					<TeamViewer />
					<FileName>TeamViewer_Setup....exe</FileName>
					<Chevron aria-label="Download options"><Svg><path d="m2 8 4-4 4 4" strokeWidth="1.300" /></Svg></Chevron>
					<DownloadDivider />
					<ShowAll>Показать все</ShowAll>
					<Ghost aria-label="Close downloads"><Close /></Ghost>
				</Downloads>
				<WinBox />
				<Watermark>
					<p>Активация Windows</p>
					<p>Чтобы активировать Windows,</p>
					<p>перейдите в раздел "Параметры".</p>
				</Watermark>
			</Browser>
		</>
	)
}

export default App
